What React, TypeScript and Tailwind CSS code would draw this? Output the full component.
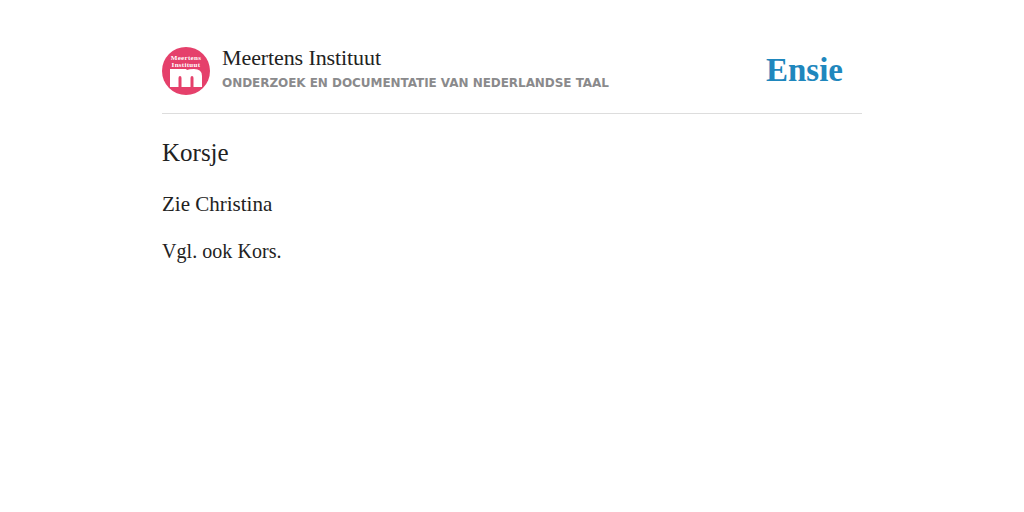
export default function App() {
  return (
    <div className="min-h-[512px] bg-white font-['Liberation_Serif',serif] text-[#222]">
      <div className="mx-auto w-[700px] pt-[47px]">
        <header className="flex items-start justify-between border-b border-[#ddd] pb-[18px]">
          <div className="flex items-start gap-3">
            {/* Round logo */}
            <div className="flex h-12 w-12 flex-col items-center overflow-hidden rounded-full bg-[#e5406b] pt-[8px] text-white">
              <span className="text-[7px] leading-[7px] font-bold tracking-[0.3px]">Meertens</span>
              <span className="text-[7px] leading-[6px] font-bold tracking-[0.3px]">Instituut</span>
              <svg width="32" height="18" viewBox="0 0 32 18" className="mt-[1px]">
                <path d="M0 0H16L17 1Q19 0 24 0Q32 0 32 7V18H23.5V9Q23.5 7 22 7Q20.5 7 20.5 9V18H11.5V9Q11.5 7 10 7Q8.5 7 8.5 9V18H0Z" fill="#fff" />
              </svg>
            </div>
            <div>
              <div className="text-[22px] leading-[22px] tracking-[-0.1px]">Meertens Instituut</div>
              <div className="mt-[6px] font-['DejaVu_Sans',sans-serif] text-[12px] leading-[16px] font-bold tracking-[-0.05px] text-[#8a8a8c]">
                ONDERZOEK EN DOCUMENTATIE VAN NEDERLANDSE TAAL
              </div>
            </div>
          </div>
          <div className="mt-[3px] mr-[19px] text-[33px] leading-[40px] font-bold text-[#1f87bd]">Ensie</div>
        </header>
        <h1 className="mt-[22px] text-[25px] leading-[34px]">Korsje</h1>
        <p className="mt-[21px] text-[21px] leading-[27px]">Zie Christina</p>
        <p className="mt-[20px] text-[20px] leading-[27px] tracking-[0.05px]">Vgl. ook Kors.</p>
      </div>
    </div>
  )
}
